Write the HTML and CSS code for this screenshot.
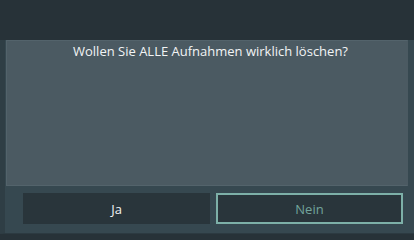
FILE: index.html
```html
<!DOCTYPE html>
<html lang="de">
<head>
<meta charset="utf-8">
<link rel="stylesheet" href="styles.css">
</head>
<body>
<div class="top"></div>
<div class="dialog">
  <div class="panel">
    <p class="question">Wollen Sie ALLE Aufnahmen wirklich löschen?</p>
  </div>
  <div class="buttons">
    <button class="btn btn-yes">Ja</button>
    <button class="btn btn-no">Nein</button>
  </div>
</div>
</body>
</html>
```

FILE: styles.css
```css
html, body {
  margin: 0;
  padding: 0;
}
body {
  width: 414px;
  height: 234px;
  background: #273238;
  font-family: "Open Sans", "Noto Sans", sans-serif;
  overflow: hidden;
}
.top {
  height: 40px;
}
.dialog {
  height: 193px;
  background: #364850;
  border-left: 5px solid #2f3e45;
  border-bottom: 1px solid #2c3a41;
  display: flex;
  flex-direction: column;
}
.panel {
  margin-left: 1px;
  width: 400px;
  height: 144px;
  background: #4b5a62;
  border: 1px solid #53636b;
  border-right-color: #4b5a62;
}
.question {
  margin: 0;
  padding-top: 1px;
  padding-left: 7px;
  text-align: center;
  color: #f2f4f5;
  font-size: 13px;
  line-height: 18px;
}
.buttons {
  display: flex;
  gap: 6px;
  margin-top: 7px;
  padding-left: 18px;
}
.btn {
  width: 187px;
  height: 31px;
  margin: 0;
  padding: 0;
  font-family: inherit;
  font-size: 13px;
  background: #29353b;
  border: none;
  color: #f2f4f5;
}
.btn-no {
  border: 2px solid #7db0a8;
  color: #72a49c;
}
```
